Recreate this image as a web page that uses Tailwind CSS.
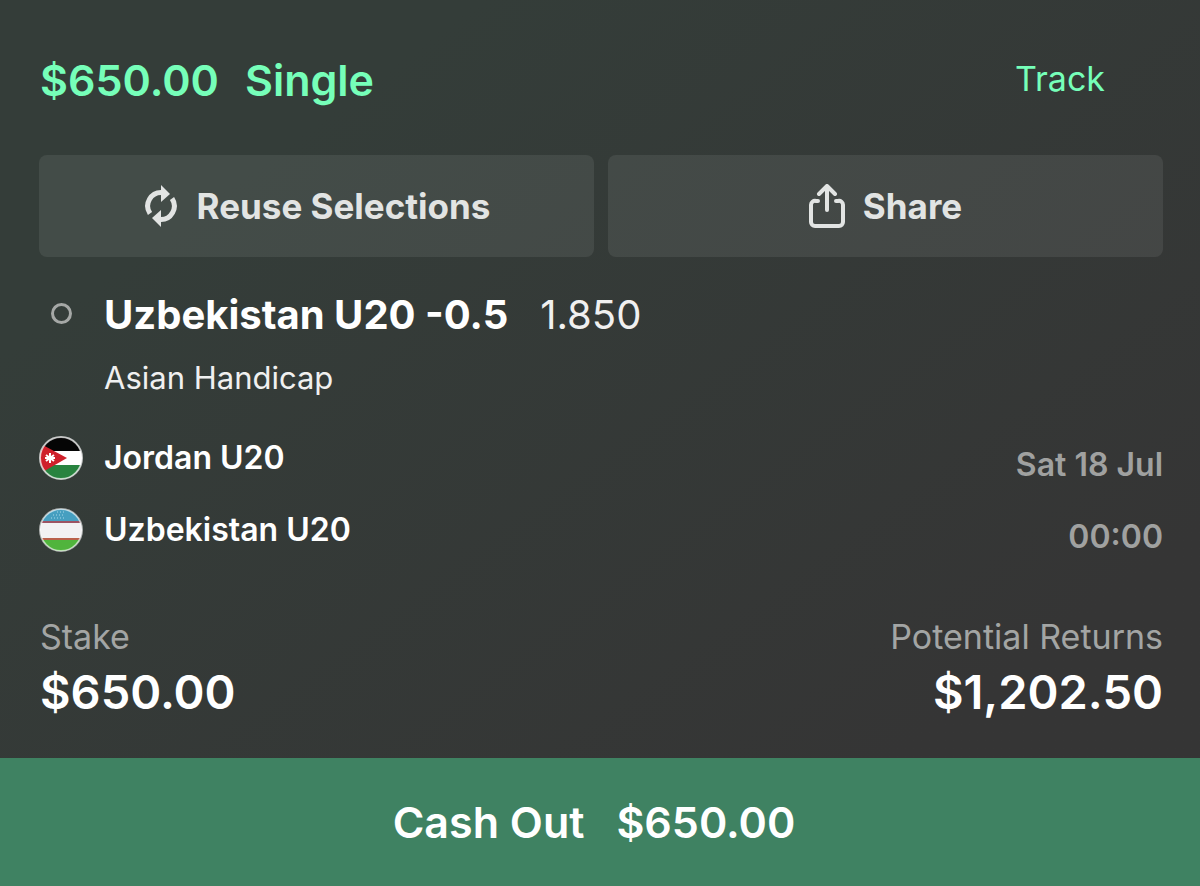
<!DOCTYPE html>
<html lang="en">
<head>
    <meta charset="UTF-8">
    <meta name="viewport" content="width=device-width, initial-scale=1.0">
    <title>My Bets</title>
    <script src="https://cdn.jsdelivr.net/npm/@tailwindcss/browser@4"></script>
</head>
<body class="min-h-screen bg-[#333]">
    <main class="min-h-screen flex flex-col font-['Inter',sans-serif] text-white bg-linear-to-br from-[#343d39] from-20% to-[#353535] to-80%">
        <div class="flex-1 pl-[39px] pr-[37px] pt-12">
            <!-- Header -->
            <header class="flex justify-between items-center h-16 pl-px pr-[58px]">
                <h1 class="flex gap-[26px] text-[43px] leading-[60px] font-semibold text-[#76ffb9]">
                    <span>$650.00</span>
                    <span>Single</span>
                </h1>
                <a href="#" class="text-[34px] text-[#76ffb9] pb-1">Track</a>
            </header>

            <!-- Actions -->
            <div class="grid grid-cols-2 gap-[14px] mt-[43px]">
                <button type="button" class="flex items-center justify-center gap-[18px] h-[102px] rounded-lg bg-white/8 text-[35px] font-bold text-[#e2e4e3]">
                    <svg class="w-9 h-11" viewBox="0 0 36 44" fill="none" stroke="currentColor" stroke-width="5">
                        <path d="M7 29.500A13.500 13.500 0 0 1 19 8.500" />
                        <path d="M29 14.500A13.500 13.500 0 0 1 17 35.500" />
                        <path d="M18 1L27 10L18 18Z" fill="currentColor" stroke="none" />
                        <path d="M18 26L9 34L18 43Z" fill="currentColor" stroke="none" />
                    </svg>
                    Reuse Selections
                </button>
                <button type="button" class="flex items-center justify-center gap-[18px] h-[102px] rounded-lg bg-white/8 text-[35px] font-bold text-[#e2e4e3]">
                    <svg class="w-9 h-11" viewBox="0 0 36 44" fill="none" stroke="currentColor" stroke-width="4" stroke-linecap="round" stroke-linejoin="round">
                        <path d="M9 17H7A4 4 0 0 0 2 21V38A4 4 0 0 0 6 42H30A4 4 0 0 0 34 38V21A4 4 0 0 0 29 17H27" />
                        <path d="M18 26V3M10 10L18 2L26 10" />
                    </svg>
                    Share
                </button>
            </div>

            <!-- Selection -->
            <section class="grid grid-cols-[44px_1fr] gap-x-[21px] mt-7">
                <div class="flex items-center justify-center h-14">
                    <span class="size-[21px] rounded-full border-3 border-[#a5a8a6]"></span>
                </div>
                <div class="flex items-center gap-8 h-[60px] text-[40px]">
                    <h2 class="font-bold">Uzbekistan U20 -0.5</h2>
                    <span class="text-[#f0f0f0]">1.850</span>
                </div>
                <p class="col-start-2 flex items-center h-[66px] text-[31px] text-[#f0f0f0]">Asian Handicap</p>
            </section>

            <!-- Match -->
            <section class="flex justify-between mt-[11px]">
                <ul class="text-[32px] font-semibold">
                    <li class="flex items-center gap-[21px] h-[72px]">
                        <svg class="size-11" viewBox="0 0 44 44">
                            <clipPath id="jordan"><circle cx="22" cy="22" r="21" /></clipPath>
                            <g clip-path="url(#jordan)">
                                <rect width="44" height="44" fill="#fff" />
                                <rect width="44" height="15" fill="#050505" />
                                <rect y="29" width="44" height="15" fill="#28833f" />
                                <path d="M0 7L28 22L0 38Z" fill="#cf202b" />
                                <path d="M11 17V27M7 19L15 25M7 25L15 19M6 22H16" stroke="#fff" stroke-width="2" />
                            </g>
                            <circle cx="22" cy="22" r="21" fill="none" stroke="#fff" stroke-opacity=".7" stroke-width="2" />
                        </svg>
                        Jordan U20
                    </li>
                    <li class="flex items-center gap-[21px] h-[72px]">
                        <svg class="size-11" viewBox="0 0 44 44">
                            <clipPath id="uzbekistan"><circle cx="22" cy="22" r="21" /></clipPath>
                            <g clip-path="url(#uzbekistan)">
                                <rect width="44" height="44" fill="#f2f1f3" />
                                <rect width="44" height="13" fill="#469fc0" />
                                <rect y="13" width="44" height="2" fill="#9c5363" />
                                <rect y="30" width="44" height="2" fill="#b9604b" />
                                <rect y="32" width="44" height="12" fill="#50b43c" />
                                <path d="M12 10H26M14 7H26M18 4H26" stroke="#a9d8e8" stroke-width="1" stroke-dasharray="1 2" />
                            </g>
                            <circle cx="22" cy="22" r="21" fill="none" stroke="#fff" stroke-opacity=".6" stroke-width="2" />
                        </svg>
                        Uzbekistan U20
                    </li>
                </ul>
                <div class="mt-[7px] text-right text-[32px] leading-[72px] font-semibold text-[#a0a1a0]">
                    <p>Sat 18 Jul</p>
                    <p>00:00</p>
                </div>
            </section>

            <!-- Totals -->
            <dl class="flex justify-between mt-10 pl-px pb-8">
                <div>
                    <dt class="text-[34px] leading-[48px] text-[#a3a5a4]">Stake</dt>
                    <dd class="text-[47px] leading-[62px] font-semibold">$650.00</dd>
                </div>
                <div class="text-right">
                    <dt class="text-[34px] leading-[48px] text-[#a3a5a4]">Potential Returns</dt>
                    <dd class="text-[47px] leading-[62px] font-semibold">$1,202.50</dd>
                </div>
            </dl>
        </div>

        <button type="button" class="flex items-center justify-center gap-8 h-32 pr-3 bg-[#3f8262] text-[43px] font-semibold">
            <span>Cash Out</span>
            <span>$650.00</span>
        </button>
    </main>
</body>
</html>
